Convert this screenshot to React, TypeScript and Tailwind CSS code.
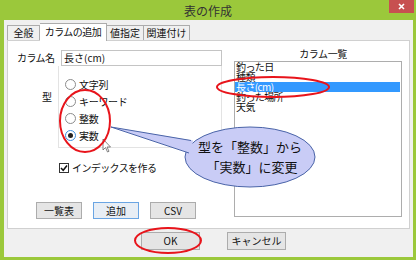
import React from 'react';

const font = { fontFamily: "'Noto Sans CJK JP', 'Noto Sans', sans-serif" };

const Radio: React.FC<{ label: string; checked?: boolean }> = ({ label, checked }) => (
  <div className="flex items-center h-[17px] gap-[3px]">
    <div
      className={`w-[11px] h-[11px] rounded-full border bg-white flex items-center justify-center ${
        checked ? 'border-[#3c8ee0]' : 'border-[#8c8c8c]'
      }`}
    >
      {checked && <div className="w-[5px] h-[5px] rounded-full bg-[#222]" />}
    </div>
    <span className="text-[10px] leading-[10px] text-[#111] tracking-[-0.3px]">{label}</span>
  </div>
);

const Btn: React.FC<{ label: string; w: string; focus?: boolean; h?: string }> = ({ label, w, focus, h }) => (
  <div
    className={`${w} ${h ?? 'h-[17px]'} border flex items-center justify-center text-[10px] leading-[10px] text-[#111] ${
      focus ? 'border-[#6aa5e3] bg-[#e8eef5]' : 'border-[#acacac] bg-[#e5e5e5]'
    }`}
  >
    {label}
  </div>
);

export default function App() {
  const columns = ['釣った日', '種類', '長さ(cm)', '釣った場所', '天気'];

  return (
    <div className="relative w-[416px] h-[260px] bg-[#9bc83b] flex flex-col overflow-hidden" style={font}>
      {/* タイトルバー */}
      <div className="relative h-[20px] flex items-center justify-center">
        <span className="text-[12px] leading-[12px] text-[#333] mt-[2px]">表の作成</span>
        <div className="absolute right-[2px] top-0 w-[25px] h-[13px] bg-[#c75050] flex items-center justify-center">
          <svg width="7" height="7" viewBox="0 0 7 7">
            <path d="M1 1 L6 6 M6 1 L1 6" stroke="#fff" strokeWidth="1.6" />
          </svg>
        </div>
      </div>

      {/* クライアント領域 */}
      <div className="ml-[4px] mr-[3px] mb-[3px] flex-1 bg-[#f0f0f0] flex flex-col">
        {/* タブ */}
        <div className="h-[20px] pl-[3px] flex items-end text-[10px] leading-[10px] text-[#111]">
          <div className="w-[33px] h-[15px] border border-b-0 border-[#acacac] bg-[#f0f0f0] flex items-center justify-center">
            全般
          </div>
          <div className="relative z-10 w-[67px] h-[18px] -mb-px border border-b-0 border-l-0 border-[#acacac] bg-white flex items-center justify-center tracking-[-0.5px] pb-[2px]">
            カラムの追加
          </div>
          <div className="w-[37px] h-[15px] border border-b-0 border-l-0 border-[#acacac] bg-[#f0f0f0] flex items-center justify-center">
            値指定
          </div>
          <div className="w-[46px] h-[15px] border border-b-0 border-l-0 border-[#acacac] bg-[#f0f0f0] flex items-center justify-center">
            関連付け
          </div>
        </div>

        {/* タブパネル */}
        <div className="mx-[3px] h-[189px] bg-white border border-[#d0d0d0] flex">
          {/* 左側 */}
          <div className="w-[214px] flex flex-col">
            <div className="flex items-center pt-[9px] pl-[9px]">
              <span className="w-[44px] text-[10px] leading-[10px] text-[#111] tracking-[-0.6px]">カラム名</span>
              <div className="w-[161px] h-[16px] border border-[#c4c4c4] bg-white flex items-center px-[2px] text-[10px] leading-[10px] text-[#111]">
                長さ(cm)
              </div>
            </div>

            <div className="flex pl-[9px]">
              <div className="w-[41px] pt-[26px] pr-[6px] text-right text-[10px] leading-[10px] text-[#111]">型</div>
              <div className="w-[164px] h-[82px] border border-t-0 border-[#e3e3e3] pt-[10px] pl-[6px] flex flex-col">
                <Radio label="文字列" />
                <Radio label="キーワード" />
                <Radio label="整数" />
                <Radio label="実数" checked />
              </div>
            </div>

            <div className="mt-[15px] pl-[51px] flex items-center gap-[3px]">
              <div className="w-[10px] h-[10px] border border-[#333] bg-white flex items-center justify-center">
                <svg width="8" height="8" viewBox="0 0 8 8">
                  <path d="M1 4 L3.2 6.3 L7 1.5" fill="none" stroke="#111" strokeWidth="1.5" />
                </svg>
              </div>
              <span className="text-[10px] leading-[10px] text-[#111] tracking-[-0.6px]">インデックスを作る</span>
            </div>

            <div className="mt-[29px] pl-[28px] flex gap-[11px]">
              <Btn label="一覧表" w="w-[46px]" />
              <Btn label="追加" w="w-[46px]" focus />
              <Btn label="CSV" w="w-[46px]" />
            </div>
          </div>

          {/* 右側 */}
          <div className="ml-[12px] flex flex-col">
            <div className="pt-[8px] pl-[10px] text-center text-[10px] leading-[10px] text-[#111] tracking-[-0.4px]">カラム一覧</div>
            <div className="mt-[2px] w-[168px] h-[156px] border border-[#adadad] bg-white flex flex-col text-[10px] leading-[10px] text-[#111] tracking-[-0.6px]">
              {columns.map((c, i) => (
                <div
                  key={i}
                  className={`h-[10px] pl-[1px] mr-[1px] ${i === 2 ? 'bg-[#3399ff] text-white' : ''}`}
                >
                  {c}
                </div>
              ))}
            </div>
          </div>
        </div>

        {/* 下部ボタン */}
        <div className="mt-[3px] pl-[137px] flex gap-[27px]">
          <Btn label="OK" w="w-[59px]" h="h-[18px]" />
          <Btn label="キャンセル" w="w-[59px]" h="h-[18px]" />
        </div>
      </div>

      {/* 注釈（吹き出し・赤丸） */}
      <svg className="absolute inset-0 pointer-events-none" width="416" height="260" viewBox="0 0 416 260">
        <ellipse cx="250" cy="157" rx="65" ry="30" fill="#c9ccf6" stroke="#4a64a8" strokeWidth="1" />
        <polygon points="193,140.5 111,127 191,153.5" fill="#c9ccf6" />
        <polyline points="191,140.5 111,127 189,153" fill="none" stroke="#4a64a8" strokeWidth="1" />
        <path d="M103 139 L103 150 L105.5 147.5 L107.5 152 L109 151.3 L107 147 L110.5 147 Z" fill="#fff" stroke="#666" strokeWidth="0.8" />
        <ellipse cx="85" cy="121" rx="25" ry="31" fill="none" stroke="#e8141b" strokeWidth="2" />
        <ellipse cx="273" cy="87" rx="56" ry="10" fill="none" stroke="#e8141b" strokeWidth="2" />
        <ellipse cx="168" cy="240.5" rx="33" ry="12.5" fill="none" stroke="#e8141b" strokeWidth="2" />
      </svg>
      <div className="absolute left-[190px] top-[137px] w-[120px] flex flex-col items-center text-[13px] leading-[20px] text-[#111]">
        <span>型を「整数」から</span>
        <span className="pl-[4px]">「実数」に変更</span>
      </div>
    </div>
  );
}
